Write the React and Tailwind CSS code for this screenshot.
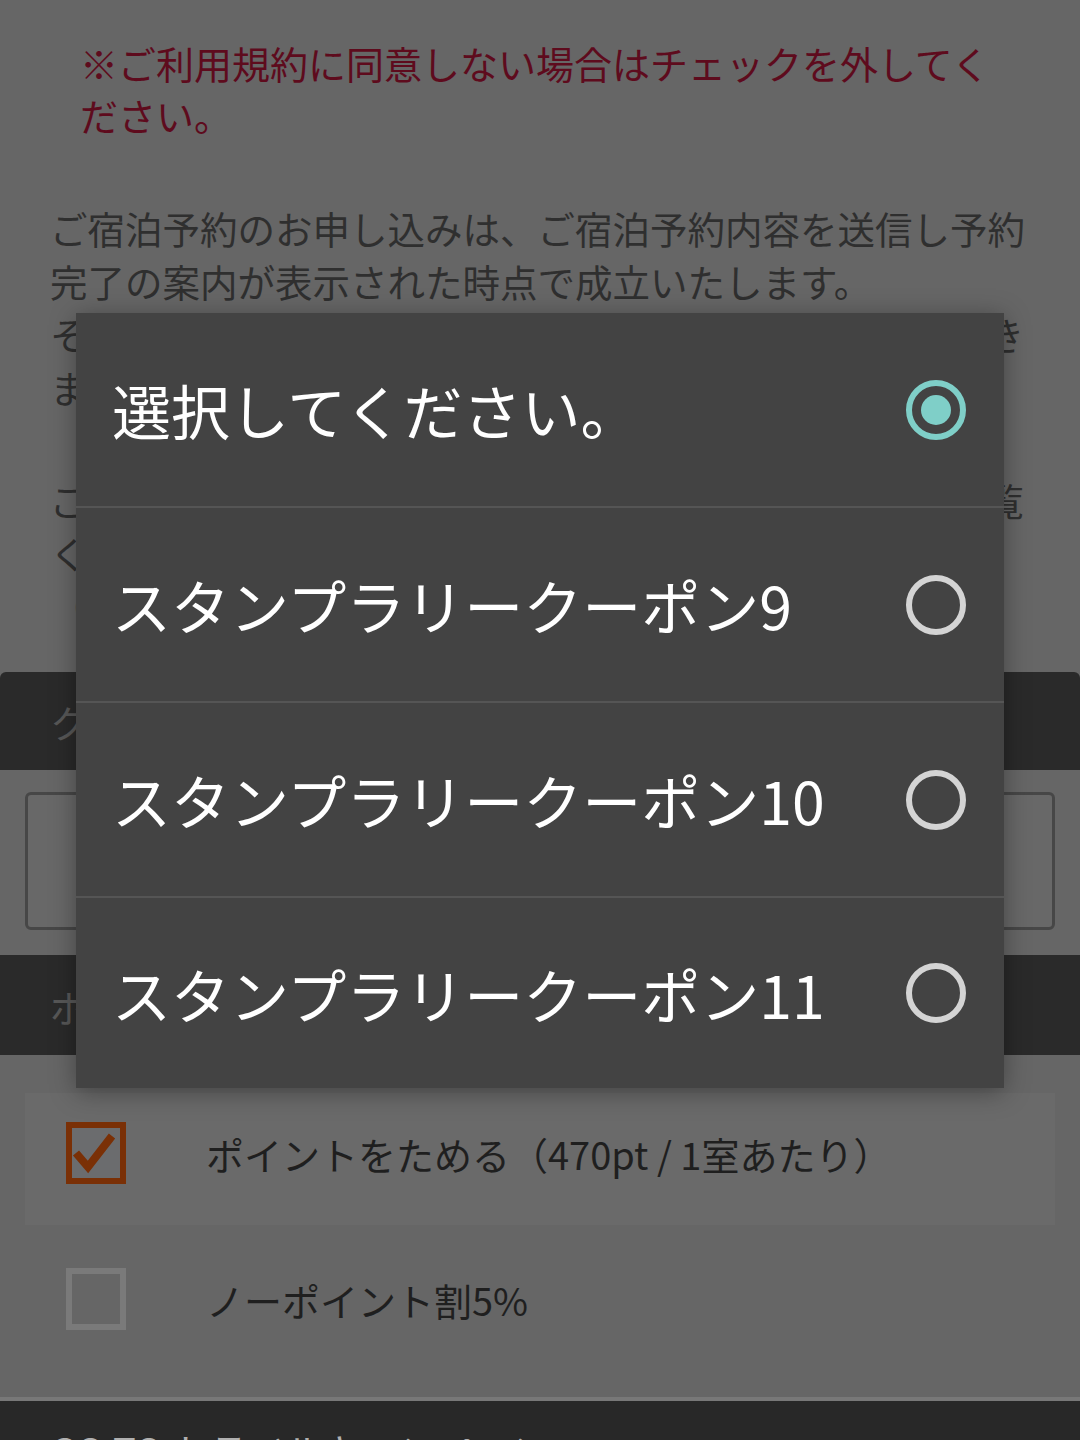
import React from 'react';

const options = [
  { label: '選択してください。', selected: true },
  { label: 'スタンプラリークーポン9', selected: false },
  { label: 'スタンプラリークーポン10', selected: false },
  { label: 'スタンプラリークーポン11', selected: false },
];

function Radio({ selected }) {
  if (selected) {
    return (
      <span className="flex items-center justify-center w-[60px] h-[60px] rounded-full border-[6px] border-[#7fcfc8] shrink-0">
        <span className="w-[30px] h-[30px] rounded-full bg-[#7fcfc8]"></span>
      </span>
    );
  }
  return <span className="w-[60px] h-[60px] rounded-full border-[6px] border-[#d4d4d4] shrink-0"></span>;
}

function Checkbox({ checked }) {
  if (checked) {
    return (
      <span className="relative w-[60px] h-[62px] border-[6px] border-[#7a3006] bg-[#6b6c6e] shrink-0">
        <svg className="absolute inset-0 w-full h-full" viewBox="0 0 48 50" fill="none">
          <path d="M4 25 L16 39 L40 8" stroke="#7a3006" strokeWidth="8" strokeLinejoin="miter" strokeLinecap="butt" />
        </svg>
      </span>
    );
  }
  return <span className="w-[60px] h-[62px] border-[6px] border-[#7a7a7a] shrink-0"></span>;
}

export default function App() {
  return (
    <div className="relative w-[1080px] h-[1440px] overflow-hidden bg-[#666666] font-['Noto_Sans_CJK_JP','Noto_Sans',sans-serif]">
      {/* page behind the dialog (dimmed) */}
      <div className="pt-[37px]">
        <p className="ml-[80px] w-[940px] text-[38px] leading-[52px] text-[#5e0b1d]">
          ※ご利用規約に同意しない場合はチェックを外してください。
        </p>

        <div className="px-[50px] text-[37.5px] leading-[53px] text-[#2f2f2f]">
          <p className="mt-[60px] w-[980px]">
            ご宿泊予約のお申し込みは、ご宿泊予約内容を送信し予約完了の案内が表示された時点で成立いたします。
            <br />
            その後の変更・取消は、予約確認ページからお手続きできます。
          </p>
          <p className="mt-[60px] w-[980px]">ご予約の前に、必ず宿泊約款・キャンセルポリシーをご覧ください。</p>
          <p>（宿泊約款はこちら）</p>
        </div>

        <div className="mt-[40px] h-[98px] bg-[#2a2a2a] rounded-t-[6px] flex items-center px-[50px] text-[38px] text-[#575757]">
          クーポン
        </div>
        <div className="mx-[25px] mt-[22px] h-[138px] border-[3px] border-[#474747] rounded-[6px] bg-[#686868]"></div>

        <div className="mt-[25px] h-[100px] bg-[#2a2a2a] flex items-center px-[50px] text-[38px] text-[#575757]">
          ポイント
        </div>

        <div className="px-[25px] pt-[38px] text-[38px] text-[#1f1f1f]">
          <div className="h-[132px] bg-[#6a6a6a] flex items-center gap-[80px] pl-[41px] pb-[12px]">
            <Checkbox checked />
            <span>ポイントをためる（470pt / 1室あたり）</span>
          </div>
          <div className="h-[150px] flex items-center gap-[80px] pl-[41px] pb-[2px]">
            <Checkbox checked={false} />
            <span>ノーポイント割5%</span>
          </div>
        </div>

        <div className="mt-[22px] border-t-[4px] border-[#787878] h-[100px] bg-[#282828] flex items-center px-[50px] text-[38px] text-[#b0b0b0]">
          GO TO トラベルキャンペーン
        </div>
      </div>

      {/* select dialog */}
      <div className="absolute left-[76px] top-[313px] w-[928px] bg-[#434343] shadow-[0_4px_24px_rgba(0,0,0,0.35)]">
        {options.map((o, i) => (
          <div
            key={o.label}
            className={`flex items-center justify-between pl-[36px] pr-[38px] ${i < options.length - 1 ? 'h-[195px] border-b-2 border-[#555555]' : 'h-[190px]'}`}
          >
            <span className="text-[59px] text-white leading-none">{o.label}</span>
            <Radio selected={o.selected} />
          </div>
        ))}
      </div>
    </div>
  );
}
